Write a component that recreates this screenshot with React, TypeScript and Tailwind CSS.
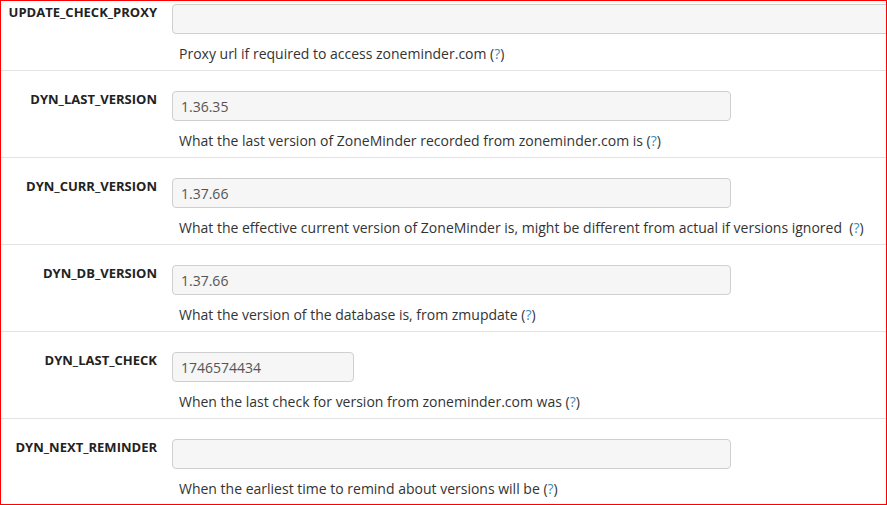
import React from 'react';

interface OptionRow {
  name: string;
  value: string;
  help: string;
  width: string;
}

const rows: OptionRow[] = [
  { name: 'UPDATE_CHECK_PROXY', value: '', help: 'Proxy url if required to access zoneminder.com ', width: 'w-[740px]' },
  { name: 'DYN_LAST_VERSION', value: '1.36.35', help: 'What the last version of ZoneMinder recorded from zoneminder.com is ', width: 'w-[559px]' },
  {
    name: 'DYN_CURR_VERSION',
    value: '1.37.66',
    help: 'What the effective current version of ZoneMinder is, might be different from actual if versions ignored\u00a0 ',
    width: 'w-[559px]',
  },
  { name: 'DYN_DB_VERSION', value: '1.37.66', help: 'What the version of the database is, from zmupdate ', width: 'w-[559px]' },
  { name: 'DYN_LAST_CHECK', value: '1746574434', help: 'When the last check for version from zoneminder.com was ', width: 'w-[182px]' },
  { name: 'DYN_NEXT_REMINDER', value: '', help: 'When the earliest time to remind about versions will be ', width: 'w-[559px]' },
];

const OptionItem: React.FC<{ row: OptionRow }> = ({ row }) => (
  <div className="flex border-t border-[#e3e3e3] pt-5 pb-[6px]">
    <label className="w-[156px] shrink-0 text-right text-[13px] leading-4 font-bold text-[#222]">
      {row.name}
    </label>
    <div className="ml-[15px] flex flex-col">
      <input
        readOnly
        value={row.value}
        className={`${row.width} h-[30px] rounded-[4px] border border-[#cfcfcf] bg-[#f6f6f6] px-2 text-[14px] text-[#555] outline-none`}
      />
      <p className="ml-[7px] mt-[10px] whitespace-nowrap text-[14px] leading-5 text-[#333]">
        {row.help}(<a className="text-[#3c8dbc]">?</a>)
      </p>
    </div>
  </div>
);

export default function App() {
  return (
    <div
      className="h-[505px] w-[887px] overflow-hidden border border-[#ff0000] bg-white"
      style={{ fontFamily: '"Open Sans", "Liberation Sans", sans-serif' }}
    >
      <div className="-mt-[18px]">
        {rows.map((row) => (
          <OptionItem key={row.name} row={row} />
        ))}
      </div>
    </div>
  );
}
